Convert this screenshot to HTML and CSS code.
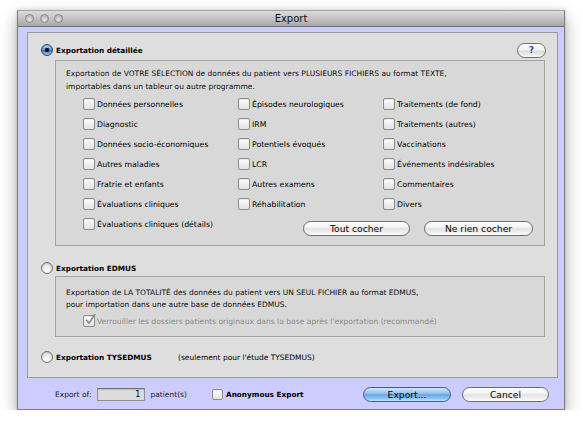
FILE: index.html
```html
<!DOCTYPE html>
<html lang="fr">
<head>
<meta charset="utf-8">
<title>Export</title>
<link rel="stylesheet" href="styles.css">
</head>
<body>
<div class="window">
  <div class="titlebar">
    <div class="lights"><span class="light"></span><span class="light"></span><span class="light"></span></div>
    <div class="title">Export</div>
    <div></div>
  </div>
  <div class="content">
    <div class="panel">
      <div class="head head-1">
        <span class="radio on"></span>
        <span class="radio-label">Exportation détaillée</span>
        <span class="help">?</span>
      </div>
      <div class="box box-1">
        <p class="desc desc-1">Exportation de VOTRE SÉLECTION de données du patient vers PLUSIEURS FICHIERS au format TEXTE,<br>importables dans un tableur ou autre programme.</p>
        <div class="checks">
          <label class="check"><span class="cb"></span>Données personnelles</label>
          <label class="check"><span class="cb"></span>Épisodes neurologiques</label>
          <label class="check"><span class="cb"></span>Traitements (de fond)</label>
          <label class="check"><span class="cb"></span>Diagnostic</label>
          <label class="check"><span class="cb"></span>IRM</label>
          <label class="check"><span class="cb"></span>Traitements (autres)</label>
          <label class="check"><span class="cb"></span>Données socio-économiques</label>
          <label class="check"><span class="cb"></span>Potentiels évoqués</label>
          <label class="check"><span class="cb"></span>Vaccinations</label>
          <label class="check"><span class="cb"></span>Autres maladies</label>
          <label class="check"><span class="cb"></span>LCR</label>
          <label class="check"><span class="cb"></span>Événements indésirables</label>
          <label class="check"><span class="cb"></span>Fratrie et enfants</label>
          <label class="check"><span class="cb"></span>Autres examens</label>
          <label class="check"><span class="cb"></span>Commentaires</label>
          <label class="check"><span class="cb"></span>Évaluations cliniques</label>
          <label class="check"><span class="cb"></span>Réhabilitation</label>
          <label class="check"><span class="cb"></span>Divers</label>
          <label class="check"><span class="cb"></span>Évaluations cliniques (détails)</label>
          <div class="check-buttons">
            <span class="btn btn-all">Tout cocher</span>
            <span class="btn btn-none">Ne rien cocher</span>
          </div>
        </div>
      </div>
      <div class="head head-2">
        <span class="radio"></span>
        <span class="radio-label">Exportation EDMUS</span>
      </div>
      <div class="box box-2">
        <p class="desc desc-2">Exportation de LA TOTALITÉ des données du patient vers UN SEUL FICHIER au format EDMUS,<br>pour importation dans une autre base de données EDMUS.</p>
        <label class="check lock"><span class="cb checked"><svg viewBox="0 0 12 12" width="12" height="12"><path d="M2.6 6.2 L5 9.2 L10.6 0.8" fill="none" stroke="#8c8c8c" stroke-width="1.7" stroke-linecap="round" stroke-linejoin="round"/></svg></span>Verrouiller les dossiers patients originaux dans la base après l'exportation (recommandé)</label>
      </div>
      <div class="head head-3">
        <span class="radio"></span>
        <span class="radio-label wide">Exportation TYSEDMUS</span>
        <span class="note">(seulement pour l'étude TYSEDMUS)</span>
      </div>
    </div>
    <div class="footer">
      <div class="count-group">
        <span class="flabel">Export of:</span>
        <span class="count">1</span>
        <span class="flabel patients">patient(s)</span>
      </div>
      <label class="anon"><span class="cb small"></span>Anonymous Export</label>
      <span class="btn default btn-export">Export...</span>
      <span class="btn btn-cancel">Cancel</span>
    </div>
  </div>
</div>
</body>
</html>
```

FILE: styles.css
```css
html, body {
  margin: 0;
  background: #ffffff;
}
body {
  font-family: "DejaVu Sans", "Noto Sans", sans-serif;
  color: #000;
  font-size: 7.75px;
}
.window {
  box-sizing: border-box;
  width: 548px;
  height: 400px;
  margin: 10px 0 0 17px;
  border: 1px solid #7e7e7e;
  border-top-color: #a4a4a4;
  background: #ccccff;
  display: flex;
  flex-direction: column;
  box-shadow: 0 7px 16px rgba(0,0,0,0.33), 0 0 3px rgba(0,0,0,0.18);
}
.titlebar {
  box-sizing: border-box;
  height: 16px;
  flex: none;
  display: grid;
  grid-template-columns: 1fr auto 1fr;
  align-items: center;
  background: linear-gradient(#dcdcdc, #c2c2c2 50%, #a9a9a9);
  border-bottom: 1px solid #707070;
}
.lights {
  display: flex;
  gap: 5.5px;
  padding-left: 7px;
  align-items: center;
}
.light {
  box-sizing: border-box;
  width: 9px;
  height: 9px;
  border-radius: 50%;
  border: 1px solid #8a8a8a;
  background: radial-gradient(circle at 50% 70%, #e6e6e6, #b4b4b4 70%);
}
.title {
  font-size: 10px;
  color: #111;
  line-height: 15px;
}
.content {
  flex: 1;
  display: flex;
  flex-direction: column;
  padding: 5px 6px 0 9px;
}
.panel {
  box-sizing: border-box;
  height: 346px;
  flex: none;
  border: 1px solid #9a9a9a;
  background: #dedede;
  padding: 9px 11px 0 13px;
}
.head {
  display: flex;
  align-items: center;
  height: 16px;
}
.head-1 { margin-bottom: 2px; }
.head-2 { margin-top: 14px; }
.head-3 { margin-top: 12px; }
.radio {
  box-sizing: border-box;
  width: 12px;
  height: 12px;
  border-radius: 50%;
  border: 1px solid #727272;
  background: radial-gradient(circle at 50% 75%, #ffffff, #dcdcdc 80%);
  box-shadow: inset 0 1px 1px rgba(0,0,0,0.12);
  flex: none;
}
.radio.on {
  border-color: #2b4670;
  background:
    radial-gradient(circle, #0c0c10 0 1.9px, transparent 2.5px),
    linear-gradient(#b5d5f6, #5a97dc 50%, #3b79c8 55%, #9ccaf5);
}
.radio-label {
  font-weight: bold;
  font-size: 7.3px;
  margin-left: 3px;
}
.radio-label.wide { width: 122px; }
.note {
  font-size: 7.5px;
}
.help {
  box-sizing: border-box;
  margin-left: auto;
  width: 29px;
  height: 15px;
  border-radius: 8px;
  border: 1px solid #6f6f6f;
  background: linear-gradient(#ffffff, #f1f1f1 45%, #dcdcdc 55%, #f6f6f6);
  color: #1d3fc4;
  font-weight: bold;
  font-size: 8.5px;
  display: flex;
  align-items: center;
  justify-content: center;
}
.box {
  box-sizing: border-box;
  margin: 0 1px 0 14px;
  border: 1px solid #a2a2a2;
  background: #d8d8d8;
}
.box-1 {
  height: 186px;
  padding: 6px 0 0 10px;
}
.box-2 {
  height: 61px;
  padding: 10px 0 0 10px;
}
.desc {
  margin: 0;
  font-size: 7.5px;
  color: #0d0d0d;
}
.desc-1 { line-height: 13px; }
.desc-2 { line-height: 12px; }
.checks {
  margin: 1px 0 0 17px;
  display: grid;
  grid-template-columns: 155px 145px 1fr;
  grid-auto-rows: 20px;
}
.check {
  display: flex;
  align-items: center;
  gap: 2px;
  white-space: nowrap;
}
.cb {
  box-sizing: border-box;
  width: 12px;
  height: 12px;
  flex: none;
  border: 1px solid #8c8c8c;
  border-radius: 2px;
  background: linear-gradient(#ffffff, #ececec 60%, #e2e2e2);
  box-shadow: inset 0 1px 1px rgba(0,0,0,0.08);
  position: relative;
}
.cb svg {
  position: absolute;
  left: 0;
  top: -2px;
}
.cb.small {
  width: 11px;
  height: 11px;
}
.check-buttons {
  grid-column: 2 / 4;
  display: flex;
  justify-content: flex-end;
  gap: 14px;
  padding-right: 11px;
  margin-top: 7px;
  align-self: start;
}
.btn {
  box-sizing: border-box;
  height: 15px;
  border-radius: 8px;
  border: 1px solid #6c6c6c;
  background: linear-gradient(#ffffff, #f4f4f4 40%, #e2e2e2 52%, #f3f3f3 85%, #ffffff);
  font-size: 9.2px;
  display: flex;
  align-items: center;
  justify-content: center;
  flex: none;
  color: #050505;
}
.btn-all { width: 107px; }
.btn-none { width: 109px; }
.lock {
  margin: 2px 0 0 17px;
  height: 16px;
  color: #8a8a8a;
  font-size: 7.6px;
}
.footer {
  flex: 1;
  display: flex;
  align-items: center;
  padding: 1px 9px 0 28px;
}
.count-group {
  display: flex;
  align-items: center;
  width: 157px;
  flex: none;
}
.flabel {
  font-size: 7.5px;
  color: #1a1a1a;
}
.count {
  box-sizing: border-box;
  margin-left: 6px;
  width: 48px;
  height: 13px;
  border: 1px solid #8f8f8f;
  border-top-color: #6f6f6f;
  background: #dcdcdc;
  box-shadow: inset 0 1px 1px rgba(0,0,0,0.15);
  text-align: right;
  padding-right: 4px;
  font-size: 8px;
  line-height: 11px;
}
.patients { margin-left: 5px; }
.anon {
  display: flex;
  align-items: center;
  gap: 3px;
  font-weight: bold;
  font-size: 7.3px;
}
.btn-export {
  margin-left: auto;
  width: 88px;
}
.btn.default {
  border-color: #3f5e8c;
  background: linear-gradient(#d0e6fc, #98c4ef 40%, #6aa6e6 52%, #8fc2f3 80%, #c4e2fc);
}
.btn-cancel {
  margin-left: 11px;
  width: 87px;
}
```
